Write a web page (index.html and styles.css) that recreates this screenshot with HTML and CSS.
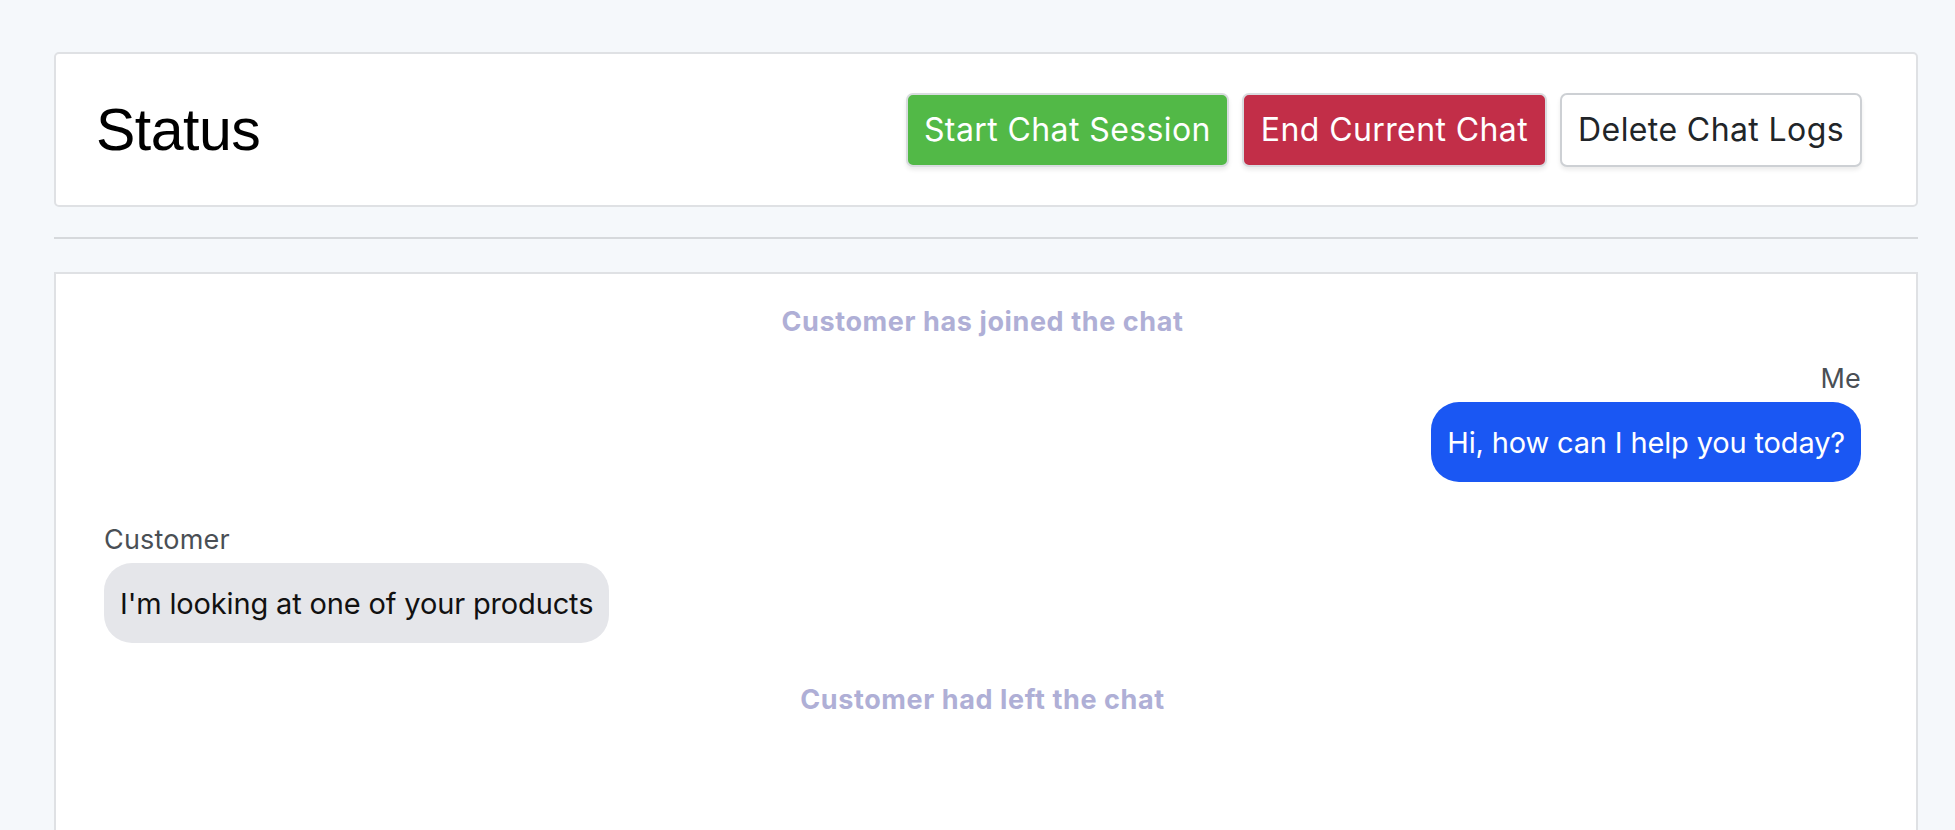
FILE: index.html
```html
<!DOCTYPE html>
<html lang="en">
<head>
<meta charset="utf-8">
<title>Chat Status</title>
<link rel="stylesheet" href="styles.css">
</head>
<body>
<div class="page">
  <header class="card status-card">
    <h1 class="title">Status</h1>
    <div class="actions">
      <button class="btn btn-start">Start Chat Session</button>
      <button class="btn btn-end">End Current Chat</button>
      <button class="btn btn-delete">Delete Chat Logs</button>
    </div>
  </header>
  <hr class="divider">
  <section class="card chat">
    <p class="sys sys-join">Customer has joined the chat</p>
    <div class="msg me">
      <span class="label">Me</span>
      <div class="bubble bubble-me">Hi, how can I help you today?</div>
    </div>
    <div class="msg them">
      <span class="label">Customer</span>
      <div class="bubble bubble-them">I'm looking at one of your products</div>
    </div>
    <p class="sys sys-left">Customer had left the chat</p>
  </section>
</div>
</body>
</html>
```

FILE: styles.css
```css
html, body {
  margin: 0;
  padding: 0;
  background: #f5f8fb;
  font-family: Inter, "Noto Sans", sans-serif;
}

.page {
  height: 100vh;
  box-sizing: border-box;
  overflow: hidden;
  display: flex;
  flex-direction: column;
  padding: 52px 37px 0 54px;
}

.card {
  background: #ffffff;
  border: 2px solid #dfe1e4;
  border-radius: 5px;
  box-sizing: border-box;
}

.status-card {
  flex: none;
  height: 155px;
  display: flex;
  align-items: center;
  justify-content: space-between;
  padding: 0 54px 0 40px;
}

.title {
  margin: 0;
  font-family: "Liberation Sans", Arial, sans-serif;
  font-weight: 400;
  font-size: 59px;
  color: #000;
  letter-spacing: -0.5px;
}

.actions {
  display: flex;
  gap: 13px;
}

.btn {
  height: 74px;
  box-sizing: border-box;
  border: 2px solid #d9dcdf;
  border-radius: 7px;
  padding: 0 17px;
  font-family: Inter, "Noto Sans", sans-serif;
  font-size: 32px;
  letter-spacing: 0.4px;
  line-height: 1;
  box-shadow: 0 3px 4px rgba(0, 0, 0, 0.08);
  cursor: pointer;
}

.btn-start {
  background: #52b947;
  color: #fff;
  padding: 0 16px;
}

.btn-end {
  background: #c22e48;
  color: #fff;
}

.btn-delete {
  background: #fff;
  color: #212529;
  border-color: #cdd0d4;
  padding: 0 16px;
}

.divider {
  flex: none;
  width: 100%;
  margin: 30px 0 33px;
  border: 0;
  border-top: 2px solid #d6d9dc;
  height: 0;
}

.chat {
  flex: 1;
  border-radius: 0;
  border-bottom: 0;
  padding: 30px 55px 0 48px;
  display: flex;
  flex-direction: column;
}

.sys {
  margin: 0;
  text-align: center;
  font-family: Inter, "Noto Sans", sans-serif;
  font-weight: 700;
  font-size: 27px;
  line-height: 36px;
  letter-spacing: 0.6px;
  color: #afafd6;
}

.msg {
  display: flex;
  flex-direction: column;
}

.msg.me {
  align-items: flex-end;
  margin-top: 23px;
}

.msg.them {
  align-items: flex-start;
  margin-top: 42px;
}

.label {
  font-size: 27px;
  line-height: 32px;
  letter-spacing: 0.2px;
  color: #4a4f55;
  margin-bottom: 7px;
}

.bubble {
  height: 80px;
  box-sizing: border-box;
  display: flex;
  align-items: center;
  padding: 0 16px;
  border-radius: 28px;
  font-size: 29px;
  letter-spacing: -0.15px;
}

.bubble-me {
  background: #1a57f3;
  color: #fff;
}

.bubble-them {
  background: #e5e6ea;
  color: #111;
}

.sys-left {
  margin-top: 39px;
}
```
